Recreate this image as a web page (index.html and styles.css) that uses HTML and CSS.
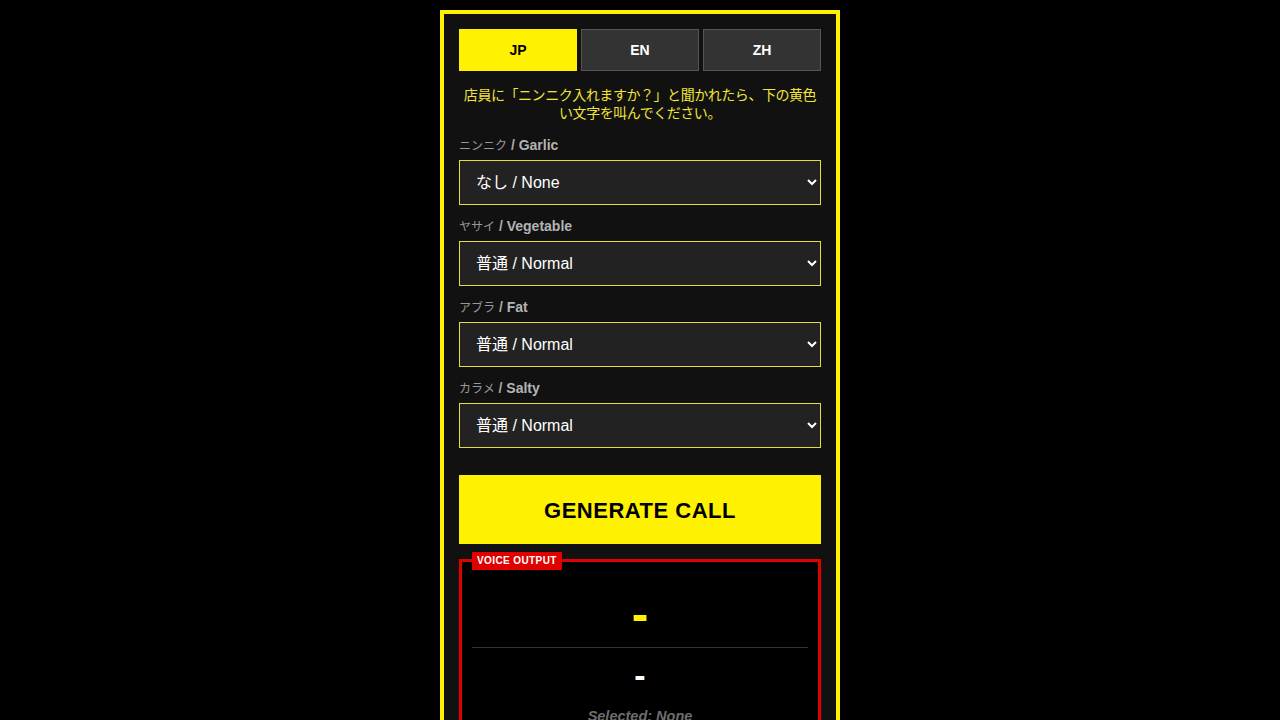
FILE: index.html
```html
<!DOCTYPE html>
<html lang="ja">
<head>
<meta charset="utf-8">
<title>Ninniku Call</title>
<link rel="stylesheet" href="styles.css">
</head>
<body>
<main class="card">
  <div class="tabs">
    <button class="tab active">JP</button>
    <button class="tab">EN</button>
    <button class="tab">ZH</button>
  </div>
  <p class="intro">店員に「ニンニク入れますか？」と聞かれたら、下の黄色い文字を叫んでください。</p>

  <div class="field">
    <label class="label"><span class="jp">ニンニク</span> / <b>Garlic</b></label>
    <select class="select"><option>なし / None</option></select>
  </div>
  <div class="field">
    <label class="label"><span class="jp">ヤサイ</span> / <b>Vegetable</b></label>
    <select class="select"><option>普通 / Normal</option></select>
  </div>
  <div class="field">
    <label class="label"><span class="jp">アブラ</span> / <b>Fat</b></label>
    <select class="select"><option>普通 / Normal</option></select>
  </div>
  <div class="field">
    <label class="label"><span class="jp">カラメ</span> / <b>Salty</b></label>
    <select class="select"><option>普通 / Normal</option></select>
  </div>

  <button class="generate">GENERATE CALL</button>

  <section class="output">
    <span class="output-tag">VOICE OUTPUT</span>
    <div class="output-main">-</div>
    <hr class="divider">
    <div class="output-sub">-</div>
    <div class="output-selected">Selected: None</div>
  </section>
</main>
</body>
</html>
```

FILE: styles.css
```css
html, body {
  margin: 0;
  padding: 0;
  background: #000;
}
body {
  font-family: "Liberation Sans", Arial, "Noto Sans CJK JP", sans-serif;
  color: #fff;
}
.card {
  width: 362px;
  margin: 10px auto 0;
  border: 4px solid #fff200;
  background: #111;
  padding: 15px 15px 40px;
}
.tabs {
  display: flex;
  gap: 4px;
}
.tab {
  flex: 1;
  height: 42px;
  border: 1px solid #555;
  background: #333;
  color: #fff;
  font-family: "Liberation Sans", Arial, sans-serif;
  font-weight: 700;
  font-size: 14px;
  padding: 0;
}
.tab.active {
  background: #fff200;
  border-color: #fff200;
  color: #000;
}
.intro {
  margin: 14px 0 17px;
  color: #f2e536;
  font-family: "Noto Sans CJK JP", sans-serif;
  font-size: 14px;
  letter-spacing: -0.45px;
  line-height: 18px;
  text-align: center;
}
.field {
  margin-bottom: 14px;
}
.label {
  display: block;
  height: 14px;
  font-size: 14px;
  line-height: 14px;
  margin-bottom: 8px;
  color: #aaa;
  font-weight: 700;
}
.label .jp {
  font-family: "Noto Sans CJK JP", sans-serif;
  font-weight: 400;
  color: #999;
  font-size: 12px;
  line-height: 14px;
}
.label b {
  color: #b4b4b4;
  font-weight: 700;
}
.select {
  display: block;
  width: 100%;
  height: 45px;
  background: #222;
  color: #fff;
  border: 1px solid #e8dc3c;
  border-radius: 0;
  font-family: "Liberation Sans", Arial, "Noto Sans CJK JP", sans-serif;
  font-size: 16px;
  padding: 0 12px;
  outline: none;
}
.generate {
  display: block;
  width: 100%;
  height: 69px;
  margin-top: 27px;
  border: none;
  background: #fff200;
  color: #000;
  font-family: "Liberation Sans", Arial, sans-serif;
  font-weight: 700;
  font-size: 22px;
  letter-spacing: 0.5px;
  padding: 2px 0 0;
}
.output {
  position: relative;
  margin-top: 15px;
  border: 3px solid #e00000;
  background: #000;
  padding: 27px 10px 30px;
  text-align: center;
}
.output-tag {
  position: absolute;
  top: -10px;
  left: 10px;
  background: #e00000;
  color: #fff;
  font-weight: 700;
  font-size: 10px;
  letter-spacing: 0.4px;
  line-height: 18px;
  padding: 0 5px;
}
.output-main {
  color: #fff200;
  font-weight: 700;
  font-size: 50px;
  line-height: 50px;
}
.divider {
  border: none;
  border-top: 1px solid #333;
  margin: 8px 0 10px;
}
.output-sub {
  color: #fff;
  font-weight: 700;
  font-size: 34px;
  line-height: 34px;
}
.output-selected {
  margin-top: 15px;
  color: #6e6e6e;
  font-style: italic;
  font-weight: 700;
  font-size: 14.5px;
  line-height: 18px;
}
```
